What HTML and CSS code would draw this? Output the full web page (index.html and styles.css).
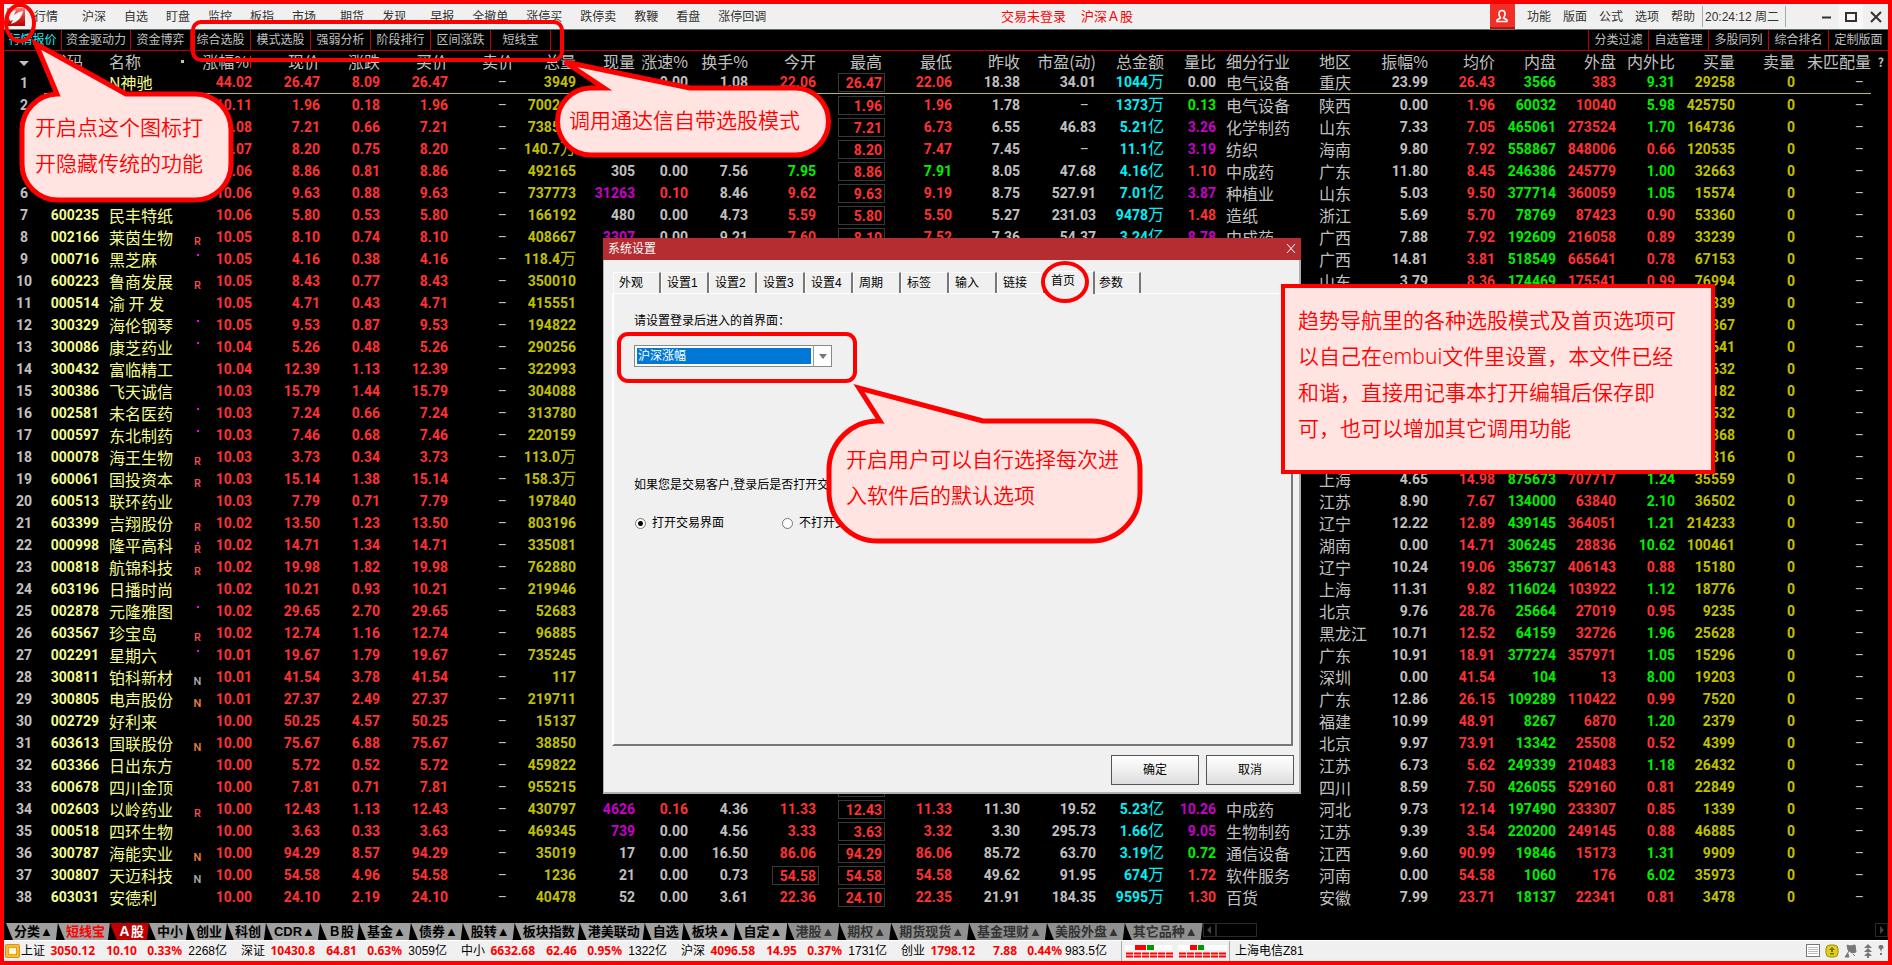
FILE: index.html
```html
<!DOCTYPE html>
<html lang="zh-CN">
<head>
<meta charset="utf-8">
<title>沪深Ａ股</title>
<link rel="stylesheet" href="styles.css">
</head>
<body>
<div class="frame">
  <header class="menubar">
    <svg class="logo" viewBox="0 0 18 18" aria-hidden="true">
      <defs><linearGradient id="lg" x1="0" y1="0" x2="0" y2="1"><stop offset="0" stop-color="#f08078"/><stop offset=".5" stop-color="#d83030"/><stop offset="1" stop-color="#b80000"/></linearGradient></defs>
      <rect width="18" height="18" fill="url(#lg)"/>
      <path d="M2 10C2 6 5 2 9 2L7 7L12 4L16 3C15 9 11 14 4 16L6 12L3 13Z" fill="#fff3f0"/>
    </svg>
    <nav class="menu">
      <button>行情</button>
      <button class="gap">沪深</button><button>自选</button><button>盯盘</button><button>监控</button><button>板指</button><button>市场</button>
      <button class="gap">期货</button><button>发现</button>
      <button class="gap">早报</button><button>全撤单</button><button>涨停买</button><button>跌停卖</button><button>教鞭</button><button>看盘</button><button>涨停回调</button>
    </nav>
    <p class="caption"><span>交易未登录</span><span>沪深Ａ股</span></p>
    <button class="user" aria-label="用户">
      <svg viewBox="0 0 14 14" width="14" height="14"><path d="M4 5a3 3.500 0 0 1 6 0c0 2-1 3-1.500 4l3.500 2v1.500H2V11l3.500-2C5 8 4 7 4 5Z" fill="none" stroke="#fff" stroke-width="1.600"/></svg>
    </button>
    <nav class="menu tools"><button>功能</button><button>版面</button><button>公式</button><button>选项</button><button>帮助</button></nav>
    <time class="clock">20:24:12 周二</time>
    <div class="winbtns">
      <button aria-label="最小化"><svg width="12" height="12"><path d="M1 6.500H10" stroke="#333" stroke-width="2"/></svg></button>
      <button class="max" aria-label="最大化"><svg width="12" height="12"><rect x="1" y="2" width="10" height="8" fill="none" stroke="#333" stroke-width="2"/></svg></button>
      <button aria-label="关闭"><svg width="12" height="12"><path d="M1 1L11 11M11 1L1 11" stroke="#333" stroke-width="2"/></svg></button>
    </div>
  </header>

  <div class="toolbar">
    <div class="group">
      <button class="on">行情报价</button><button class="wide">资金驱动力</button><button>资金博弈</button><button>综合选股</button><button>模式选股</button><button>强弱分析</button><button>阶段排行</button><button>区间涨跌</button><button>短线宝</button>
    </div>
    <div class="group right">
      <button>分类过滤</button><button>自选管理</button><button>多股同列</button><button>综合排名</button><button>定制版面</button>
    </div>
  </div>

  <main class="board">
    <table class="quotes">
      <colgroup id="cols"></colgroup>
      <thead>
        <tr>
          <th class="idx"><span class="down"></span></th><th class="code">代码</th><th class="name"><span class="namehead">名称<i></i></span></th>
          <th colspan="2">涨幅%<span class="sort"></span></th><th>现价</th><th>涨跌</th><th>买价</th><th>卖价</th><th>总量</th><th>现量</th><th>涨速%</th><th>换手%</th><th>今开</th><th>最高</th><th>最低</th><th>昨收</th><th>市盈(动)</th><th>总金额</th><th>量比</th><th class="left">细分行业</th><th class="left">地区</th><th>振幅%</th><th>均价</th><th>内盘</th><th>外盘</th><th>内外比</th><th>买量</th><th>卖量</th><th>未匹配量</th><th class="help">?</th>
        </tr>
      </thead>
      <tbody id="rows"></tbody>
    </table>
  </main>

  <nav class="sheets">
    <button>分类▲</button><button class="hot">短线宝</button><button class="on">Ａ股</button><button>中小</button><button>创业</button><button>科创</button><button>CDR▲</button><button>Ｂ股</button><button>基金▲</button><button>债券▲</button><button>股转▲</button><button>板块指数</button><button>港美联动</button><button>自选</button><button>板块▲</button><button>自定▲</button><button class="dim">港股▲</button><button class="dim">期权▲</button><button class="dim">期货现货▲</button><button class="dim">基金理财▲</button><button class="dim">美股外盘▲</button><button class="dim">其它品种▲</button>
    <span class="arrow"><svg width="6" height="8"><path d="M5 0V8L1 4Z" fill="#444"/></svg></span><span class="thumb"></span>
    <span class="arrow last"><svg width="6" height="8"><path d="M1 0V8L5 4Z" fill="#444"/></svg></span>
  </nav>

  <footer class="status">
    <svg class="coin" viewBox="0 0 15 14" aria-hidden="true"><rect x=".5" y=".5" width="14" height="13" rx="1" fill="#f8b830" stroke="#d89020"/><rect x="3.500" y="3.500" width="8" height="7" fill="#fff8d0" stroke="#e8a020"/></svg>
    <dl class="index"><dt>上证</dt><dd>3050.12</dd><dd>10.10</dd><dd>0.33%</dd><dd class="amt">2268亿</dd></dl>
    <dl class="index"><dt>深证</dt><dd>10430.8</dd><dd>64.81</dd><dd>0.63%</dd><dd class="amt">3059亿</dd></dl>
    <dl class="index"><dt>中小</dt><dd>6632.68</dd><dd>62.46</dd><dd>0.95%</dd><dd class="amt">1322亿</dd></dl>
    <dl class="index"><dt>沪深</dt><dd>4096.58</dd><dd>14.95</dd><dd>0.37%</dd><dd class="amt">1731亿</dd></dl>
    <dl class="index"><dt>创业</dt><dd>1798.12</dd><dd>7.88</dd><dd>0.44%</dd><dd class="amt">983.5亿</dd></dl>
    <div class="meter">
      <svg width="102" height="18" aria-hidden="true">
        <rect y="3" x="0" width="47" height="5" fill="#fff"/><rect y="3" x="53" width="49" height="5" fill="#fff"/>
        <rect x="10" y="3" width="11" height="5" fill="#f00"/><rect x="22" y="3" width="7" height="5" fill="#090"/>
        <rect x="65" y="3" width="7" height="5" fill="#f00"/><rect x="73" y="3" width="6" height="5" fill="#090"/>
        <path d="M1 11.500H48M1 14.500H48M54 11.500H101M54 14.500H101" stroke="#f00" stroke-width="2" stroke-dasharray="7 1"/>
      </svg>
    </div>
    <span class="server">上海电信Z81</span>
    <div class="icons">
      <svg width="14" height="14"><rect x=".5" y=".5" width="13" height="12" fill="#fff" stroke="#777"/><path d="M2 3.500H12M2 5.500H12M2 7.500H12M2 9.500H12" stroke="#bbb"/></svg>
      <svg width="14" height="14"><rect x="1" y="1" width="12" height="12" rx="4" fill="#e0d020" stroke="#a09000"/><path d="M7 3L10 6H8V8H6V6H4ZM5 9H9V10.500H5Z" fill="#7a7000"/></svg>
      <svg width="14" height="14"><path d="M3 1L6 2L11 1L12 8L8 9L4 6ZM5 7L3 10L1 13H5L4 10M9 10L11 12" fill="#777" stroke="#777"/></svg>
      <svg width="10" height="14"><path d="M5 0L9 4H1ZM5 4L9 8H1ZM5 8L9 12H1ZM4 11H6V14H4Z" fill="#777"/></svg>
      <svg width="6" height="14"><path d="M3 1a2 2 0 0 1 1 4L3 8L2 5A2 2 0 0 1 3 1ZM2 9H4V11H2Z" fill="#777"/></svg>
    </div>
  </footer>
</div>

<section class="dialog" role="dialog" aria-label="系统设置">
  <header class="title"><h1>系统设置</h1><button aria-label="关闭对话框"><svg width="10" height="10"><path d="M1 0L9 9M9 0L1 9" stroke="#fff"/></svg></button></header>
  <nav class="tabs"><button>外观</button><button>设置1</button><button>设置2</button><button>设置3</button><button>设置4</button><button>周期</button><button>标签</button><button>输入</button><button>链接</button><button class="on">首页</button><button>参数</button></nav>
  <form class="page">
    <label class="lead" for="home">请设置登录后进入的首界面：</label>
    <div class="combo"><select id="home"><option>沪深涨幅</option></select><span></span></div>
    <p class="ask">如果您是交易客户,登录后是否打开交易界面</p>
    <div class="choices">
      <input type="radio" name="t" id="r1" checked><label for="r1">打开交易界面</label>
      <input type="radio" name="t" id="r2"><label for="r2">不打开交易界面</label>
    </div>
  </form>
  <div class="actions"><button>确定</button><button>取消</button></div>
</section>

<div class="notes">
  <svg class="ink" width="1892" height="965" aria-hidden="true">
    <g fill="none" stroke="#f00" stroke-width="4">
      <ellipse cx="20" cy="23" rx="14" ry="18"/>
      <rect x="193" y="22" width="369" height="38" rx="8"/>
      <ellipse cx="1065" cy="282" rx="22" ry="19"/>
      <rect x="619" y="334" width="236" height="47" rx="9"/>
    </g>
    <g fill="#ffe4e1" stroke="#f00" stroke-width="5">
      <path d="M126 94L36 44L57 94A36 36 0 0 0 22 130V164A36 36 0 0 0 58 200H195A36 36 0 0 0 231 164V130A36 36 0 0 0 195 94Z"/>
      <path d="M690 88L565 62L604 88H591A33 33 0 0 0 591 155H795A33 33 0 0 0 795 88Z"/>
      <path d="M983 421L859 388L880 421A49 49 0 0 0 829 470V492A49 49 0 0 0 878 541H1091A49 49 0 0 0 1140 492V470A49 49 0 0 0 1091 421Z"/>
      <rect x="1283" y="286" width="430" height="186" stroke-width="4"/>
    </g>
  </svg>
  <p class="n1">开启点这个图标打<br>开隐藏传统的功能</p>
  <p class="n2">调用通达信自带选股模式</p>
  <p class="n3">开启用户可以自行选择每次进<br>入软件后的默认选项</p>
  <p class="n4">趋势导航里的各种选股模式及首页选项可<br>以自己在embui文件里设置，本文件已经<br>和谐，直接用记事本打开编辑后保存即<br>可，也可以增加其它调用功能</p>
</div>
<script src="script.js"></script>
</body>
</html>
```
FILE: styles.css
```css
* { box-sizing: border-box; }
body { margin: 0; background: #000; font: 12px/16px "Liberation Sans", "Noto Sans CJK SC", sans-serif; color: #333; }
button { font: inherit; color: inherit; background: none; border: 0; padding: 0; white-space: nowrap; }
p, h1, dl, dd { margin: 0; }
svg { display: block; flex: none; }

.frame { display: flex; flex-direction: column; min-height: 100vh; border: 4px solid #f00; }

/* menu bar */
.menubar { display: flex; align-items: stretch; height: 26px; background: #f0f0f0; border-bottom: 1px solid #607070; }
.logo { width: 18px; height: 18px; margin: 4px 9px 0 3px; }
.menu { display: flex; gap: 18px; }
.menu .gap { margin-left: 6px; }
.caption { flex: 1; display: flex; justify-content: flex-end; align-items: center; gap: 15px; margin-right: 357px; font-size: 13px; color: #f00; white-space: nowrap; }
.user { width: 25px; display: grid; place-items: center; background: #f03028; border-bottom: 2px solid #b01810; }
.tools { gap: 12px; margin: 0 7px 0 12px; }
.clock { display: flex; align-items: center; width: 84px; padding-left: 2px; border: solid #aaa; border-width: 0 1px; margin-block: 2px; white-space: nowrap; }
.winbtns { display: flex; margin-left: 29px; }
.winbtns button { width: 24px; display: grid; place-items: center; }
.winbtns .max { background: #f8f8f8; }
.winbtns button:last-child { width: 25px; }

/* toolbar */
.toolbar { display: flex; justify-content: space-between; height: 21px; border-bottom: 1px solid #c00000; color: #c0c0c0; }
.group { display: flex; }
.group button { min-width: 60px; padding: 0 4px; border-right: 1px solid #c00000; }
.group .on { min-width: 58px; color: #20e8f0; }
.group .wide { min-width: 69px; }
.right button { border-right: 0; border-left: 1px solid #c00000; }

/* quotes */
.board { flex: 1; }
.quotes { width: 100%; table-layout: fixed; border-collapse: separate; border-spacing: 0; font: bold 14px/22px Roboto, "Noto Sans CJK SC", sans-serif; color: #c0c0c0; }
.quotes th, .quotes td { height: 22px; padding: 0; text-align: right; white-space: nowrap; }
.quotes thead th { height: 21px; font: 16px/21px "Noto Sans CJK SC", sans-serif; }
.quotes .idx { text-align: center; }
.quotes td.code, .quotes td.name { color: #f4fc90; }
.quotes th.code { text-align: left; padding-left: 7px; }
.quotes .name { text-align: left; padding-left: 10px; }
.quotes td.name, .quotes td.left { font: 16px/22px "Noto Sans CJK SC", sans-serif; }
.quotes .left { text-align: left; padding-left: 10px; }
.quotes .dash { padding-right: 7px; font-weight: 400; }
.quotes tbody tr:first-child td:not(.idx):not(.end) { border-bottom: 1px solid #c0c000; line-height: 21px; }
.quotes .namehead { display: flex; justify-content: space-between; align-items: center; padding-right: 6px; }
.namehead i { width: 3px; height: 3px; background: #c0c0c0; }
.down { display: inline-block; border: 5px solid transparent; border-top-color: #c0c0c0; border-bottom: 0; vertical-align: middle; }
.sort { display: inline-block; width: 1px; height: 12px; margin: 0 1px; background: #f00; }
.quotes thead .help { font-size: 12px; font-weight: bold; padding-right: 4px; }
.mark { display: flex; flex-direction: column; align-items: center; justify-content: flex-end; height: 21px; font: 500 11px/12px Roboto, sans-serif; color: #f05050; }
.mark i { width: 2px; height: 2px; flex: none; background: #f0f; }
.mark.only { justify-content: flex-start; padding-top: 5px; }
.mark.n { color: #b0b0b0; }
.mark.o { color: #f08040; }
.r { color: #ff3232; }
.g { color: #00f000; }
.y { color: #c0c000; }
.c { color: #00f0f8; }
.m { color: #c800c8; }
.unit { font-size: 16px; font-weight: 400; line-height: 1px; }
.box { display: block; width: 47px; height: 19px; line-height: 18px; padding-right: 2px; margin: 1px -3px 1px auto; border: 1px solid #383838; }

/* sheet tabs */
.sheets { display: flex; height: 17px; padding-left: 2px; color: #000; font: bold 13px/16px "Liberation Sans", "Noto Sans CJK SC", sans-serif; }
.sheets button { padding: 0 5px 0 8px; background: #a0a0a0; clip-path: polygon(0 0, 100% 0, calc(100% - 2px) 100%, 7px 100%); }
.sheets .hot { color: #f00; }
.sheets .on { background: #c00000; color: #fff; }
.sheets .dim { background: #909090; color: #333; }
.arrow { display: grid; place-items: center; width: 13px; height: 14px; border: 1px solid #2a2a2a; }
.thumb { width: 41px; height: 14px; border: 1px solid #2a2a2a; }
.last { margin-left: auto; }

/* status bar */
.status { display: flex; align-items: center; height: 21px; background: #f0f0f0; border-top: 1px solid #fff; color: #000; white-space: nowrap; }
.coin { width: 15px; height: 14px; margin: 0 1px; }
.index { display: grid; grid-template-columns: 25px 49px 42px 45px 59px; text-align: right; }
.index dt { text-align: left; }
.index dd { font: bold 12px/16px "Noto Sans", sans-serif; color: #f00; }
.index .amt { font: 12px/16px "Liberation Sans", "Noto Sans CJK SC", sans-serif; color: #000; padding-right: 14px; }
.meter { width: 109px; height: 20px; padding: 1px 3px; border: solid #aaa; border-width: 0 1px; }
.server { margin-left: 5px; flex: 1; }
.icons { display: flex; gap: 5px; margin-right: 4px; }

/* settings dialog */
.dialog { position: absolute; left: 603px; top: 238px; width: 698px; display: flex; flex-direction: column; background: #f0f0f0; border: 1px solid #b0b0b0; border-width: 0 2px 2px 1px; color: #000; }
.title { display: flex; justify-content: space-between; align-items: center; height: 22px; margin: 0 -2px 0 -1px; padding: 0 5px; background: #b52d31; color: #fff; }
.title h1 { font: inherit; }
.tabs { display: flex; align-items: flex-end; height: 33px; padding-left: 9px; }
.tabs button { width: 48px; height: 21px; padding-left: 5px; text-align: left; border: solid #fff; border-width: 1px 2px 0 1px; border-right-color: #777; }
.tabs .on { width: 50px; height: 23px; margin: 0 -2px -1px 0; padding-bottom: 4px; background: #f0f0f0; border-right-color: #777; position: relative; }
.page { height: 453px; margin: 0 6px 0 8px; padding: 19px 20px; border: 2px solid #fff; border-right-color: #777; border-bottom-color: #777; border-top-width: 1px; }
.lead { display: block; }
.combo { display: flex; width: 198px; height: 22px; margin: 16px 0 110px; border: 1px solid #888; background: #fff; }
.combo select { appearance: none; flex: 1; margin: 2px; padding: 0 1px; border: 0; border-radius: 0; background: #0078d7; color: #fff; font: inherit; }
.combo span { width: 18px; border-left: 1px solid #999; }
.combo span::after { content: ""; display: block; margin: 8px 0 0 5px; width: 0; border: 4px solid transparent; border-top: 5px solid #777; border-bottom: 0; }
.choices { display: flex; align-items: center; margin-top: 22px; }
.choices input { appearance: none; width: 11px; height: 11px; margin: 0 6px 0 1px; border: 1px solid #777; border-radius: 50%; background: #fff; }
.choices input:checked { background: radial-gradient(#000 0 2px, #fff 3px); }
.choices label { width: 129px; white-space: nowrap; }
.ask { white-space: nowrap; }
.actions { display: flex; justify-content: flex-end; gap: 7px; padding: 9px 5px 7px; }
.actions button { width: 88px; height: 30px; border: 1px solid #555; background: linear-gradient(#fff, #f0f0f0 50%, #dcdcdc); }

/* call-outs */
.notes { position: absolute; left: 0; top: 0; width: 100%; height: 100%; overflow: hidden; pointer-events: none; font: 350 21px/36px "Noto Sans", "Noto Sans CJK SC", sans-serif; color: #f00; white-space: nowrap; }
.ink { position: absolute; left: 0; top: 0; }
.notes p { position: absolute; }
.n1 { left: 35px; top: 109px; }
.n2 { left: 569px; top: 102px; }
.n3 { left: 846px; top: 441px; }
.n4 { left: 1298px; top: 302px; }
```
FILE: script.js
```js
// column widths, left to right; they share out the table's full width
const widths = [40, 55, 91, 15, 47, 68, 60, 68, 66, 62, 59, 53, 60, 68, 66, 70, 68, 76, 68, 52, 93, 61, 58, 67, 61, 60, 59, 60, 60, 76, 17];
document.getElementById("cols").innerHTML = widths.map(w => `<col style="width:${w}px">`).join("");

// code|name|mark|pct|price|chg|volume|last|speed|turnover|open|high|low|prev|pe|amount|ratio|industry|area|range|avg|in|out|in/out|bid volume
const data = `
|N神驰||44.02|26.47|8.09|3949||0.00|1.08|22.06|26.47|22.06|18.38|34.01|1044万|0.00|电气设备|重庆|23.99|26.43|3566|383|9.31|29258
|||10.11|1.96|0.18|700260|||||1.96|1.96|1.78|–|1373万|0.13|电气设备|陕西|0.00|1.96|60032|10040|5.98|425750
|||10.08|7.21|0.66|738500|||||7.21|6.73|6.55|46.83|5.21亿|3.26|化学制药|山东|7.33|7.05|465061|273524|1.70|164736
|||10.07|8.20|0.75|140.7万|||||8.20|7.47|7.45|–|11.1亿|3.19|纺织|海南|9.80|7.92|558867|848006|0.66|120535
|||10.06|8.86|0.81|492165|305|0.00|7.56|7.95|8.86|7.91|8.05|47.68|4.16亿|1.10|中成药|广东|11.80|8.45|246386|245779|1.00|32663
|||10.06|9.63|0.88|737773|31263|0.10|8.46|9.62|9.63|9.19|8.75|527.91|7.01亿|3.87|种植业|山东|5.03|9.50|377714|360059|1.05|15574
600235|民丰特纸||10.06|5.80|0.53|166192|480|0.00|4.73|5.59|5.80|5.50|5.27|231.03|9478万|1.48|造纸|浙江|5.69|5.70|78769|87423|0.90|53360
002166|莱茵生物|r|10.05|8.10|0.74|408667|3307|0.00|9.21|7.60|8.10|7.52|7.36|54.37|3.24亿|8.78|中成药|广西|7.88|7.92|192609|216058|0.89|33239
000716|黑芝麻|d|10.05|4.16|0.38|118.4万|广西|14.81|3.81|518549|665641|0.78|67153
600223|鲁商发展|r|10.05|8.43|0.77|350010|山东|3.79|8.36|174469|175541|0.99|76994
000514|渝 开 发||10.05|4.71|0.43|415551|||||||839
300329|海伦钢琴|d|10.05|9.53|0.87|194822|||||||367
300086|康芝药业|d|10.04|5.26|0.48|290256|||||||641
300432|富临精工||10.04|12.39|1.13|322993|||||||632
300386|飞天诚信||10.03|15.79|1.44|304088|||||||182
002581|未名医药|d|10.03|7.24|0.66|313780|||||||532
000597|东北制药|d|10.03|7.46|0.68|220159|||||||368
000078|海王生物|r|10.03|3.73|0.34|113.0万|||||||816
600061|国投资本|r|10.03|15.14|1.38|158.3万|上海|4.65|14.98|875673|707717|1.24|35559
600513|联环药业||10.03|7.79|0.71|197840|江苏|8.90|7.67|134000|63840|2.10|36502
603399|吉翔股份|r|10.02|13.50|1.23|803196|辽宁|12.22|12.89|439145|364051|1.21|214233
000998|隆平高科|b|10.02|14.71|1.34|335081|湖南|0.00|14.71|306245|28836|10.62|100461
000818|航锦科技|r|10.02|19.98|1.82|762880|辽宁|10.24|19.06|356737|406143|0.88|15180
603196|日播时尚||10.02|10.21|0.93|219946|上海|11.31|9.82|116024|103922|1.12|18776
002878|元隆雅图|d|10.02|29.65|2.70|52683|北京|9.76|28.76|25664|27019|0.95|9235
603567|珍宝岛|r|10.02|12.74|1.16|96885|黑龙江|10.71|12.52|64159|32726|1.96|25628
002291|星期六|d|10.01|19.67|1.79|735245|广东|10.91|18.91|377274|357971|1.05|15296
300811|铂科新材|n|10.01|41.54|3.78|117|深圳|0.00|41.54|104|13|8.00|19203
300805|电声股份|o|10.01|27.37|2.49|219711|广东|12.86|26.15|109289|110422|0.99|7520
002729|好利来||10.00|50.25|4.57|15137|福建|10.99|48.91|8267|6870|1.20|2379
603613|国联股份|o|10.00|75.67|6.88|38850|北京|9.97|73.91|13342|25508|0.52|4399
603366|日出东方||10.00|5.72|0.52|459822|江苏|6.73|5.62|249339|210483|1.18|26432
600678|四川金顶||10.00|7.81|0.71|955215|四川|8.59|7.50|426055|529160|0.81|22849
002603|以岭药业|r|10.00|12.43|1.13|430797|4626|0.16|4.36|11.33|12.43|11.33|11.30|19.52|5.23亿|10.26|中成药|河北|9.73|12.14|197490|233307|0.85|1339
000518|四环生物||10.00|3.63|0.33|469345|739|0.00|4.56|3.33|3.63|3.32|3.30|295.73|1.66亿|9.05|生物制药|江苏|9.39|3.54|220200|249145|0.88|46885
300787|海能实业|o|10.00|94.29|8.57|35019|17|0.00|16.50|86.06|94.29|86.06|85.72|63.70|3.19亿|0.72|通信设备|江西|9.60|90.99|19846|15173|1.31|9909
300807|天迈科技|n|10.00|54.58|4.96|1236|21|0.00|0.73|54.58|54.58|54.58|49.62|91.95|674万|1.72|软件服务|河南|0.00|54.58|1060|176|6.02|35973
603031|安德利||10.00|24.10|2.19|40478|52|0.00|3.61|22.36|24.10|22.35|21.91|184.35|9595万|1.30|百货|安徽|7.99|23.71|18137|22341|0.81|3478`.trim().split("\n");

const cell = (text, cls = "") => {
  const body = text.replace(/[万亿]/, u => `<span class="unit">${u}</span>`);
  return `<td class="${cls}${text === "–" ? " dash" : ""}">${body}</td>`;
};
const marks = {
  r: '<span class="mark">R</span>', d: '<span class="mark only"><i></i></span>',
  b: '<span class="mark"><i></i>R</span>', n: '<span class="mark n">N</span>', o: '<span class="mark o">N</span>'
};
const ratioClass = v => +v === 0 ? "" : v < 1 ? "g" : v < 3 ? "r" : "m";
const box = v => `<span class="box">${v}</span>`;

document.getElementById("rows").innerHTML = data.map((line, i) => {
  const f = line.split("|");
  const [code, name, mark, pct, price, chg, vol] = f;
  // short records have no middle columns
  const mid = f.length > 14 ? f.slice(7, 18) : Array(11).fill("");
  const [last, speed, turn, open, high, low, prev, pe, amount, ratio, industry] = mid;
  const [area, range, avg, inn, out, io, bid] = f.slice(-7);
  const vs = v => +v < +prev ? "g" : "r";
  return `<tr><td class="idx">${i + 1}</td>${cell(code, "code")}${cell(name, "name")}<td>${marks[mark] || ""}</td>`
    + cell(pct, "r") + cell(price, "r") + cell(chg, "r") + cell(price, "r") + cell("–") + cell(vol, "y")
    + cell(last, +last >= 500 ? "m" : "") + cell(speed, +speed > 0 ? "r" : "") + cell(turn)
    + (i === 36 ? `<td class="r">${box(open)}</td>` : cell(open, vs(open)))
    + `<td class="r">${box(high)}</td>` + cell(low, vs(low)) + cell(prev) + cell(pe) + cell(amount, "c")
    + cell(ratio, ratioClass(ratio)) + cell(industry, "left") + cell(area, "left") + cell(range) + cell(avg, "r")
    + cell(inn, "g") + cell(out, "r") + cell(io, io < 1 ? "r" : "g") + cell(bid, "y") + cell("0", "y") + cell("–") + `<td class="end"></td></tr>`;
}).join("");
```
